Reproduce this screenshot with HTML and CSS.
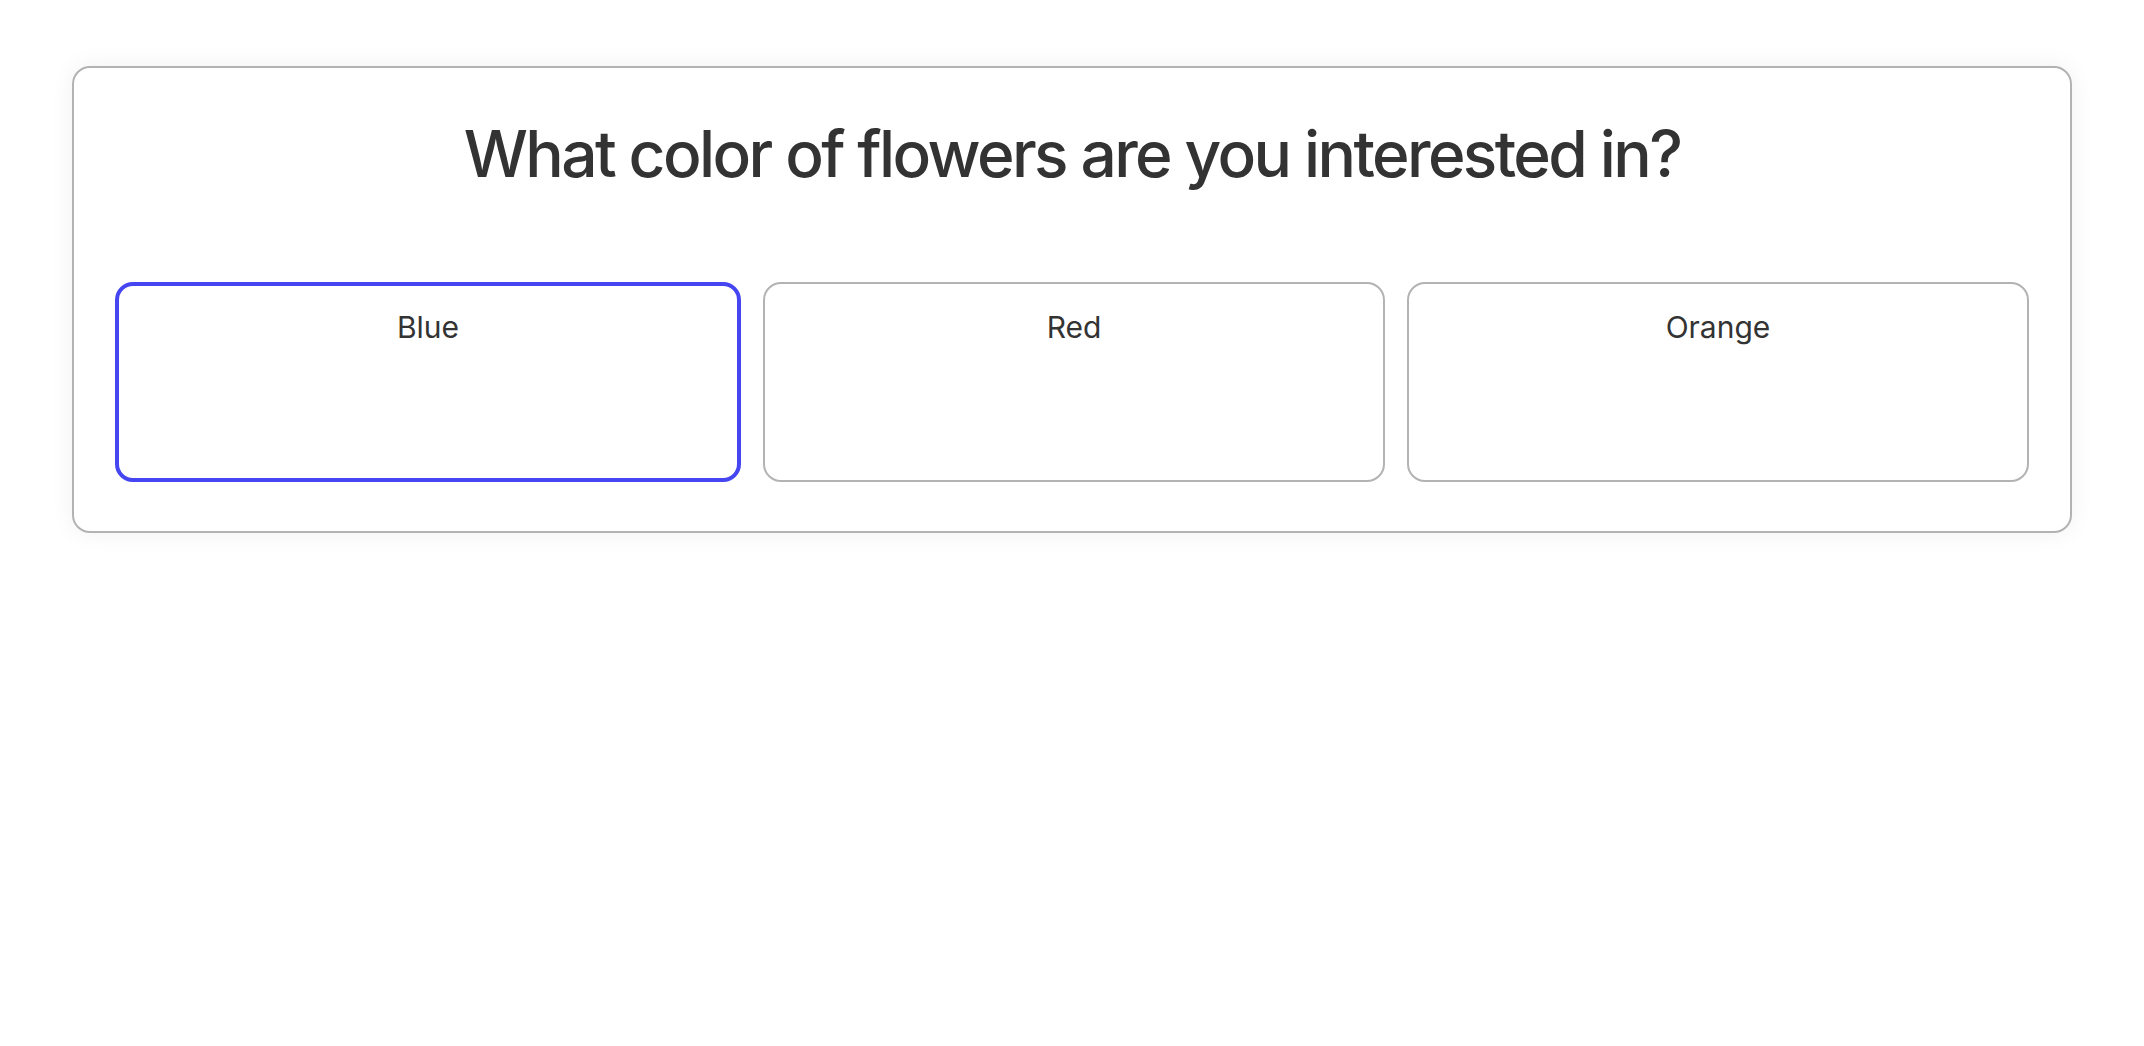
FILE: index.html
```html
<!DOCTYPE html>
<html>
<head>
<meta charset="utf-8">
<link rel="stylesheet" href="styles.css">
</head>
<body>
<div class="card">
  <h1 class="title">What color of flowers are you interested in?</h1>
  <div class="options">
    <div class="option selected">Blue</div>
    <div class="option">Red</div>
    <div class="option">Orange</div>
  </div>
</div>
</body>
</html>
```
FILE: styles.css
```css
html, body {
  margin: 0;
  padding: 0;
  background: #ffffff;
}
body {
  font-family: Inter, "Noto Sans", sans-serif;
  color: #333333;
  padding: 66px 72px;
}
.card {
  border: 2px solid #b3b3b3;
  border-radius: 18px;
  box-shadow: 0 0 24px rgba(0, 0, 0, 0.06);
  padding: 47px 41px 49px;
  background: #fff;
}
.title {
  margin: 0 0 90px;
  text-align: center;
  font-size: 64px;
  font-weight: 500;
  letter-spacing: -2.6px;
  line-height: 1.21;
  color: #333333;
}
.options {
  display: flex;
  gap: 22px;
}
.option {
  flex: 1;
  height: 200px;
  box-sizing: border-box;
  border: 2px solid #b3b3b3;
  border-radius: 18px;
  text-align: center;
  font-size: 30px;
  line-height: 1.21;
  padding-top: 25px;
}
.option.selected {
  border: 4px solid #4545f2;
  padding-top: 23px;
}
```
